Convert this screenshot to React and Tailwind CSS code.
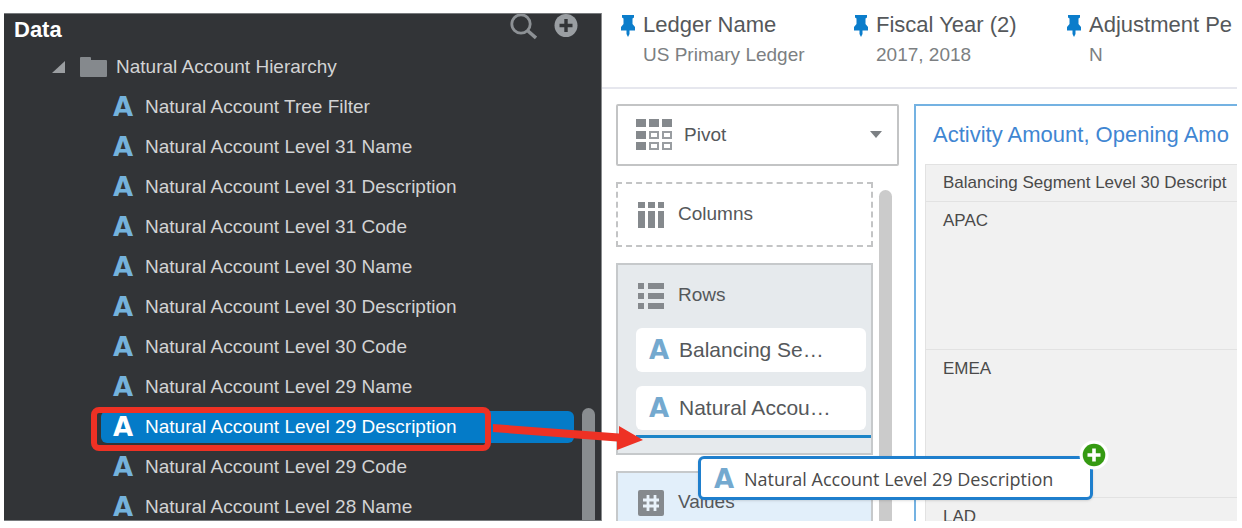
import React from 'react';

const FIELDS = [
  'Natural Account Tree Filter',
  'Natural Account Level 31 Name',
  'Natural Account Level 31 Description',
  'Natural Account Level 31 Code',
  'Natural Account Level 30 Name',
  'Natural Account Level 30 Description',
  'Natural Account Level 30 Code',
  'Natural Account Level 29 Name',
  'Natural Account Level 29 Description',
  'Natural Account Level 29 Code',
  'Natural Account Level 28 Name',
];

const SELECTED = 'Natural Account Level 29 Description';

const FILTERS = [
  { name: 'Ledger Name', value: 'US Primary Ledger', width: 'w-[233px]' },
  { name: 'Fiscal Year (2)', value: '2017, 2018', width: 'w-[213px]' },
  { name: 'Adjustment Pe', value: 'N', width: 'flex-1' },
];

function AttributeMark({ tone = 'text-[#74a9cf]' }) {
  return (
    <span className={`w-8 shrink-0 text-left font-['DejaVu_Sans',sans-serif] text-[26px] leading-8 font-bold ${tone}`}>A</span>
  );
}

function PinIcon() {
  return (
    <svg className="mt-0.5 h-[22px] w-4 shrink-0" viewBox="0 0 16 22" fill="#0b7dcb" aria-hidden="true">
      <path d="M2 0h12v2.500l-1.500 1V9l2.500 3v3.500H9.500V19L8 22l-1.500-3v-3.500H1V12l2.500-3V3.500L2 2.500z" />
    </svg>
  );
}

function PivotIcon() {
  return (
    <svg className="h-8 w-9 shrink-0" viewBox="0 0 36 32" aria-hidden="true">
      <g fill="#85898d">
        <path d="M0 0h10v8H0zM13 0h10v8H13zM26 0h10v8H26zM0 12h10v8H0zM0 23h10v8H0z" />
      </g>
      <g fill="none" stroke="#999da1" strokeWidth="2">
        <path d="M14 13h8v6h-8zM27 13h8v6h-8zM14 24h8v6h-8zM27 24h8v6h-8z" />
      </g>
    </svg>
  );
}

function ColumnsIcon() {
  return (
    <svg className="h-[26px] w-[26px] shrink-0" viewBox="0 0 26 26" fill="#85898d" aria-hidden="true">
      <path d="M0 0h7v6H0zM10 0h7v6h-7zM20 0h6v6h-6zM0 9h7v17H0zM10 9h7v17h-7zM20 9h6v17h-6z" />
    </svg>
  );
}

function RowsIcon() {
  return (
    <svg className="h-[26px] w-[26px] shrink-0" viewBox="0 0 26 26" fill="#85898d" aria-hidden="true">
      <path d="M0 0h6v6H0zM10 0h16v6H10zM0 10h6v6H0zM10 10h16v6H10zM0 20h6v6H0zM10 20h16v6H10z" />
    </svg>
  );
}

function ValuesIcon() {
  return (
    <svg className="h-[26px] w-[26px] shrink-0" viewBox="0 0 26 26" aria-hidden="true">
      <rect width="26" height="26" rx="2" fill="#85898d" />
      <path d="M10 5v16M17 5v16M5 10h16M5 16h16" stroke="#e9f2fa" strokeWidth="2.8" fill="none" />
    </svg>
  );
}

function DataPanel() {
  return (
    <aside className="flex w-[597px] shrink-0 overflow-hidden border-t border-b border-[#777a7d] bg-[#323437]">
      <div className="flex min-w-0 flex-1 flex-col">
        <header className="-mr-1 flex h-[33px] shrink-0 items-start justify-between pl-2.5">
          <h2 className="text-[22px] leading-8 font-bold text-white">Data</h2>
          <div className="flex gap-[17px]">
            <button type="button" aria-label="Search" className="h-7 w-7">
              <svg className="h-7 w-7" viewBox="0 0 28 28" fill="none" stroke="#8d9195" aria-hidden="true">
                <circle cx="12" cy="10" r="9.2" strokeWidth="2.8" />
                <path d="M19 17l8 7" strokeWidth="3.6" />
              </svg>
            </button>
            <button type="button" aria-label="Add" className="h-6 w-6">
              <svg className="h-6 w-6" viewBox="0 0 24 24" aria-hidden="true">
                <circle cx="12" cy="11.5" r="11.5" fill="#9a9ea2" />
                <path d="M12 5v13M5.500 11.500h13" stroke="#323437" strokeWidth="3.400" />
              </svg>
            </button>
          </div>
        </header>
        <div className="flex h-10 shrink-0 items-center pl-12 text-[19px] text-[#d2d3d4]">
          <svg className="h-3 w-3.5" viewBox="0 0 14 12" fill="#9b9ea1" aria-hidden="true">
            <path d="M13 0v12H0z" />
          </svg>
          <svg className="mr-2 ml-3.5 h-[22px] w-7" viewBox="0 0 28 22" fill="#85898d" aria-hidden="true">
            <path d="M0 2q0-1 1-1h9q1 0 1 1v2h15q1 0 1 1v15q0 1-1 1H1q-1 0-1-1z" />
          </svg>
          Natural Account Hierarchy
        </div>
        <ul className="pl-[97px]">
          {FIELDS.map((field) => (
            <li key={field} className="relative flex h-10 items-center">
              <button
                type="button"
                className={
                  field === SELECTED
                    ? 'flex h-8 w-full items-center rounded-md bg-[#047bc8] pl-3 text-[19px] text-white'
                    : 'flex h-8 w-full items-center pl-3 text-[19px] text-[#d2d3d4]'
                }
              >
                <AttributeMark tone={field === SELECTED ? 'text-white' : 'text-[#74b2dc]'} />
                {field}
              </button>
              {field === SELECTED && (
                <span className="absolute top-0 -left-2.5 h-11 w-[400px] rounded-lg border-[6px] border-[#ee3124]" />
              )}
            </li>
          ))}
        </ul>
      </div>
      <div className="flex w-[27px] flex-col pt-[394px] pl-2">
        <div className="w-[13px] flex-1 rounded-t-full bg-[#898d90]" />
      </div>
    </aside>
  );
}

function RowChip({ children }) {
  return (
    <button type="button" className="flex h-11 w-full items-center rounded-md bg-white pl-[13px] text-[21px] text-[#55585b]">
      <span className="-mr-0.5 flex">
        <AttributeMark />
      </span>
      {children}
    </button>
  );
}

function GrammarPanel() {
  return (
    <div className="flex w-[283px] shrink-0 flex-col gap-4">
      <label className="flex h-[62px] shrink-0 items-center rounded-xs border-2 border-[#c3c4c5] pr-3.5 pl-[18px]">
        <PivotIcon />
        <select aria-label="Visualization type" className="ml-3 flex-1 appearance-none bg-transparent text-[19px] text-[#55585b] outline-none">
          <option>Pivot</option>
        </select>
        <svg className="h-2 w-3.5" viewBox="0 0 14 8" fill="#7c8084" aria-hidden="true">
          <path d="M1 0h12L7 7z" />
        </svg>
      </label>
      <div className="flex min-h-0 flex-1 gap-1.5">
        <div className="flex w-[257px] flex-col gap-4 overflow-hidden text-[19px] text-[#55585b]">
          <section className="flex h-[65px] shrink-0 items-center gap-3.5 border-2 border-dashed border-[#c3c4c5] pl-5">
            <ColumnsIcon />
            <h3>Columns</h3>
          </section>
          <section className="flex h-48 shrink-0 flex-col border-2 border-[#c6c9cb] bg-[#e6eaed]">
            <div className="flex h-[63px] shrink-0 items-center gap-3.5 pb-0.5 pl-5">
              <RowsIcon />
              <h3>Rows</h3>
            </div>
            <div className="flex flex-col gap-3.5 pr-[5px] pl-[18px]">
              <RowChip>Balancing Se…</RowChip>
              <RowChip>Natural Accou…</RowChip>
            </div>
            <div className="mt-[5px] ml-[18px] h-[3px] bg-[#1e86c8]" />
          </section>
          <section className="flex h-32 shrink-0 items-start gap-3.5 border-2 border-[#c6c9cb] bg-[#e2effa] pt-[17px] pl-5">
            <ValuesIcon />
            <h3 className="leading-6">Values</h3>
          </section>
        </div>
        <div className="flex flex-1 flex-col pt-2">
          <div className="w-[13px] flex-1 rounded-t-full bg-[#cbcbcb]" />
        </div>
      </div>
    </div>
  );
}

function PivotView() {
  return (
    <section className="flex min-w-0 flex-1 flex-col overflow-hidden border-t-2 border-l-2 border-[#74b2e2] pl-[9px]">
      <h2 className="h-[58px] shrink-0 pl-2 text-[22px] leading-[58px] whitespace-nowrap text-[#3f86d2]">
        Activity Amount, Opening Amo
      </h2>
      <table className="w-full table-fixed border-collapse bg-[#f1f1f1] text-left text-[17px] leading-5 text-[#4a4a4a]">
        <thead>
          <tr className="h-[37px] border border-r-0 border-[#e2e2e2]">
            <th className="pl-[17px] font-normal whitespace-nowrap">Balancing Segment Level 30 Descript</th>
          </tr>
        </thead>
        <tbody>
          {['APAC', 'EMEA', 'LAD'].map((region) => (
            <tr key={region} className="h-[148px] border border-r-0 border-[#e2e2e2]">
              <td className="pt-[9px] pl-[17px] align-top">{region}</td>
            </tr>
          ))}
        </tbody>
      </table>
    </section>
  );
}

function DragOverlay() {
  return (
    <>
      <svg className="pointer-events-none absolute top-[424px] left-[492px] h-8 w-[152px]" viewBox="0 0 152 32" fill="#ee3124" aria-hidden="true">
        <path d="M1 0L127 9.500V2L151 16 125 26V17.500L1 8z" />
      </svg>
      <div className="absolute top-[456px] left-[698px] flex h-11 w-[395px] items-center rounded-md border-[3px] border-[#1f7fcd] bg-white pt-0.5 pl-[13px] font-['Open_Sans',sans-serif] text-[18px] text-[#4a4a4a] shadow">
        <AttributeMark />
        <span className="-ml-0.5 whitespace-nowrap">{SELECTED}</span>
        <svg className="absolute -top-[19px] -right-[19px] h-[30px] w-[30px]" viewBox="0 0 30 30" aria-hidden="true">
          <circle cx="15" cy="15" r="14.500" fill="#fff" />
          <circle cx="15" cy="15" r="11.300" fill="#359a12" />
          <path d="M15 8.500v13M8.500 15h13" stroke="#fff" strokeWidth="3.600" />
        </svg>
      </div>
    </>
  );
}

export default function App() {
  return (
    <main className="relative flex h-screen overflow-hidden bg-white pt-[13px] pr-[5px] pb-[7px] pl-1 font-['Liberation_Sans',Arial,sans-serif]">
      <DataPanel />
      <div className="flex min-w-0 flex-1 flex-col overflow-hidden border-l border-[#8a8c8e]">
        <header className="flex h-[76px] shrink-0 overflow-hidden border-b-2 border-[#e6e7ee] pl-[18px]">
          {FILTERS.map((filter) => (
            <div key={filter.name} className={`flex shrink-0 gap-[7px] whitespace-nowrap ${filter.width}`}>
              <PinIcon />
              <div>
                <div className="text-[22px] leading-6 text-[#55585b]">{filter.name}</div>
                <div className="mt-1.5 text-[19px] leading-6 text-[#7c7f82]">{filter.value}</div>
              </div>
            </div>
          ))}
        </header>
        <div className="flex min-h-0 flex-1 gap-[15px] pt-[15px] pl-3.5">
          <GrammarPanel />
          <PivotView />
        </div>
      </div>
      <DragOverlay />
    </main>
  );
}
